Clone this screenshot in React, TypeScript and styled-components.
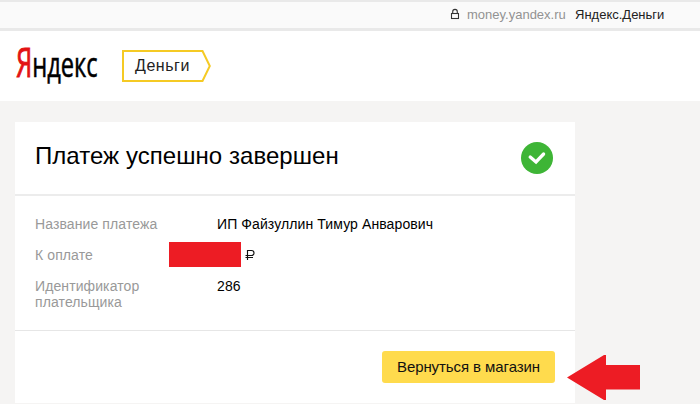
import React from "react";
import styled, { createGlobalStyle } from "styled-components";

const GlobalStyle = createGlobalStyle`
  body { margin: 0; background: #f5f4f3; font-family: "Liberation Sans", Arial, sans-serif; color: #000; }
  * { box-sizing: border-box; }
`;

const Page = styled.div`
  width: 700px;
  height: 404px;
  overflow: hidden;
  background: #f5f4f3;
`;

const AddressBar = styled.div`
  height: 31px;
  display: flex;
  align-items: flex-start;
  padding: 5px 0 0 450px;
  background: #fafafa;
  border-top: 2px solid #e9e9e9;
  border-bottom: 3px solid #e9e9e9;
  font-size: 13px;
  line-height: 16px;
  white-space: nowrap;
`;

const LockIcon = styled.svg`
  width: 10px;
  height: 12px;
  flex: none;
  margin: 1px 7px 0 0;
`;

const Host = styled.span`
  width: 108px;
  color: #929292;
`;

const SiteTitle = styled.span`
  color: #222;
`;

const Header = styled.header`
  height: 70px;
  display: flex;
  background: #fff;
  padding: 2px 0 0 14px;
`;

const Logo = styled.svg`
  width: 90px;
  height: 60px;
  flex: none;
  overflow: visible;
  font-family: "Open Sans", sans-serif;
`;

const Service = styled.div`
  display: flex;
  position: relative;
  width: 90px;
  height: 32px;
  margin: 17px 0 0 18px;
  padding-left: 13px;
  align-items: center;
  font-size: 16px;
  line-height: 18px;
  color: #222;
`;

const ServiceFrame = styled.svg`
  position: absolute;
  left: 0;
  top: 0;
`;

const ServiceName = styled.span`
  letter-spacing: 0.55px;
`;

const Main = styled.main`
  display: flex;
  align-items: flex-start;
  padding: 21px 0 0 15px;
`;

const Card = styled.section`
  width: 560px;
  height: 281px;
  flex: none;
  background: #fff;
`;

const CardHeader = styled.div`
  height: 74px;
  display: flex;
  align-items: flex-start;
  justify-content: space-between;
  padding: 20px 22px 0 20px;
  border-bottom: 2px solid #ececec;
`;

const Title = styled.h1`
  margin: 0;
  font-size: 24px;
  line-height: 28px;
  font-weight: 400;
  letter-spacing: 0.05px;
  white-space: nowrap;
`;

const Details = styled.dl`
  margin: 0;
  height: 135px;
  padding: 20px 20px 0;
  border-bottom: 1px solid #e6e6e6;
  font-size: 14px;
  line-height: 16px;
  letter-spacing: 0.1px;
`;

const Row = styled.div`
  display: flex;
  min-height: 16px;
  margin-bottom: 15px;
`;

const Label = styled.dt`
  width: 134px;
  color: #999;
`;

const Value = styled.dd`
  margin: 0 0 0 48px;
  white-space: nowrap;
`;

const Amount = styled.dd`
  margin: -5px 0 -4px;
  display: flex;
  align-items: center;
`;

const Redaction = styled.span`
  width: 72px;
  height: 25px;
  background: #ed1c24;
  margin-right: 4px;
`;

const Footer = styled.div`
  display: flex;
  justify-content: flex-end;
  padding: 20px 20px 0;
`;

const Button = styled.button`
  width: 173px;
  height: 32px;
  padding: 0;
  border: 0;
  border-radius: 3px;
  background: #ffdb4d;
  color: #111;
  font: 15px/32px "Liberation Sans", Arial, sans-serif;
  letter-spacing: -0.08px;
  white-space: nowrap;
`;

const Pointer = styled.svg`
  width: 74px;
  height: 46px;
  flex: none;
  margin: 232px 0 0 -9px;
`;

export default function App() {
  return (
    <Page>
      <GlobalStyle />
      <AddressBar>
        <LockIcon viewBox="0 0 10 12" fill="none" stroke="#333" strokeWidth="1.1">
          <rect x="1.5" y="5.5" width="7" height="5" />
          <path d="M2.7 5.5V3.7a2.3 2.3 0 0 1 4.6 0v1.8" />
        </LockIcon>
        <Host>money.yandex.ru</Host>
        <SiteTitle>Яндекс.Деньги</SiteTitle>
      </AddressBar>
      <Header>
        <Logo viewBox="0 0 90 60">
          <text x="2.2" y="44" fontSize="40" fill="#e31313" stroke="#e31313" strokeWidth="1" textLength="16" lengthAdjust="spacingAndGlyphs">Я</text>
          <text x="18.2" y="44" fontSize="35" fill="#000" stroke="#000" strokeWidth="0.55" textLength="65.5" lengthAdjust="spacingAndGlyphs">ндекс</text>
        </Logo>
        <Service>
          <ServiceFrame width="90" height="32" fill="none" stroke="#f5ca24" strokeWidth="2">
            <path d="M1 1H80.5L87.8 16L80.5 31H1Z" />
          </ServiceFrame>
          <ServiceName>Деньги</ServiceName>
        </Service>
      </Header>
      <Main>
        <Card>
          <CardHeader>
            <Title>Платеж успешно завершен</Title>
            <svg width="32" height="32" viewBox="0 0 32 32">
              <circle cx="16" cy="16" r="16" fill="#3eb536" />
              <path d="M9.2 15L15 20L22.6 12" fill="none" stroke="#fff" strokeWidth="3.3" strokeLinecap="round" />
            </svg>
          </CardHeader>
          <Details>
            <Row>
              <Label>Название платежа</Label>
              <Value>ИП Файзуллин Тимур Анварович</Value>
            </Row>
            <Row>
              <Label>К оплате</Label>
              <Amount>
                <Redaction />
                <svg width="11" height="12" viewBox="0 0 11 12" fill="none" stroke="#111" strokeWidth="1.15">
                  <path d="M2.5 11V1.5H6.5a2.5 2.5 0 0 1 0 5H0.5M0.5 8.5H8" />
                </svg>
              </Amount>
            </Row>
            <Row>
              <Label>Идентификатор плательщика</Label>
              <Value>286</Value>
            </Row>
          </Details>
          <Footer>
            <Button>Вернуться в магазин</Button>
          </Footer>
        </Card>
        <Pointer viewBox="0 0 74 46">
          <path d="M1 23.5L38 1H40V11H74V35.5H40V46H38Z" fill="#ed1c24" />
        </Pointer>
      </Main>
    </Page>
  );
}
